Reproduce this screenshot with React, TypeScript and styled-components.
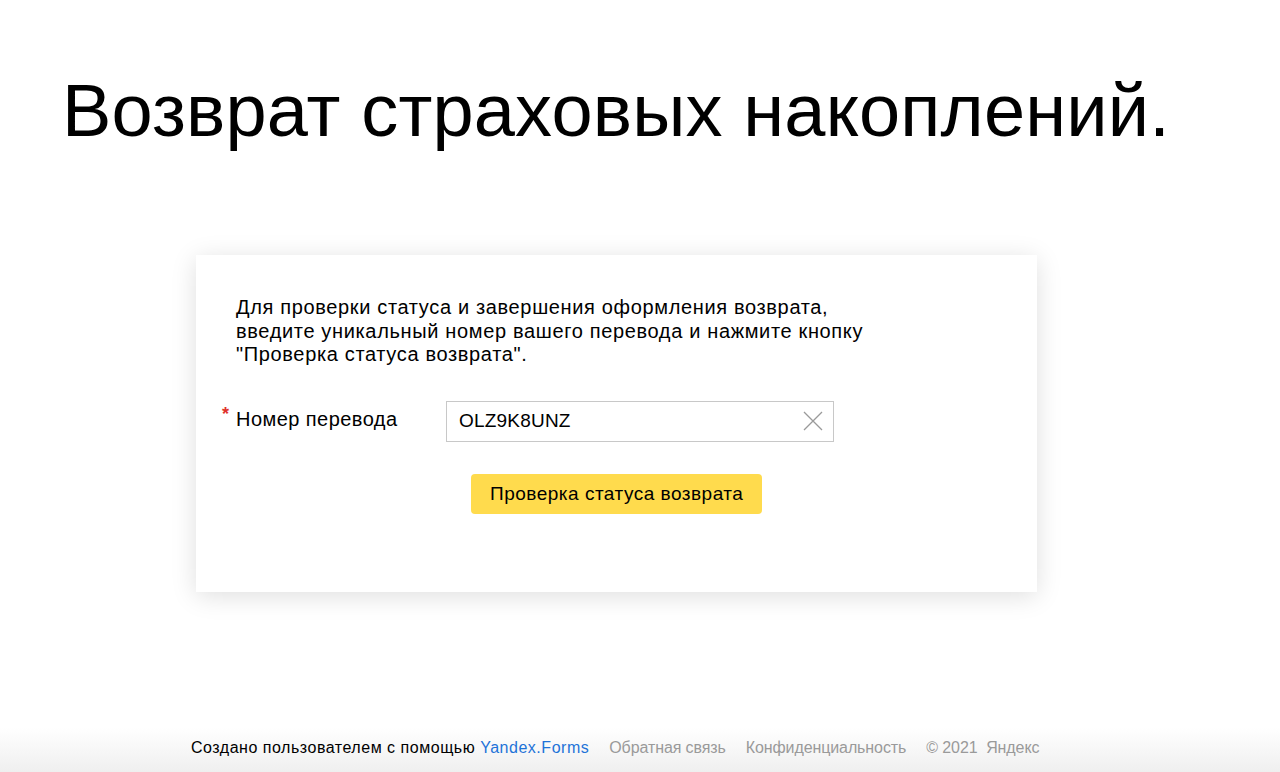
import React from "react";
import styled, { createGlobalStyle } from "styled-components";

const Global = createGlobalStyle`
  html, body { margin: 0; padding: 0; background: #fff; }
  body { font-family: "Liberation Sans", Arial, sans-serif; color: #000; }
`;

const Page = styled.div`
  min-height: 772px;
  display: flex;
  flex-direction: column;
`;

const Title = styled.h1`
  margin: 0;
  padding: 69px 0 0 62px;
  font-weight: 400;
  font-size: 74px;
  line-height: 84px;
  letter-spacing: 0.15px;
`;

const Main = styled.main`
  flex: 1;
  display: flex;
  justify-content: flex-start;
  padding: 102px 0 0 196px;
`;

const Card = styled.section`
  width: 841px;
  height: 337px;
  box-sizing: border-box;
  background: #fff;
  box-shadow: 0 4px 24px rgba(0, 0, 0, 0.13);
  padding: 41px 40px 0 40px;
`;

const Intro = styled.p`
  margin: 0;
  font-size: 20px;
  line-height: 23.5px;
  letter-spacing: 0.65px;
`;

const FieldRow = styled.div`
  display: flex;
  align-items: flex-start;
  margin-top: 34px;
`;

const Label = styled.label`
  position: relative;
  width: 210px;
  font-size: 20px;
  line-height: 24px;
  letter-spacing: 0.45px;
  padding-top: 6px;
`;

const Required = styled.span`
  position: absolute;
  left: -14px;
  top: 1px;
  color: #e0312b;
  font-size: 18px;
  font-weight: 700;
`;

const InputBox = styled.div`
  width: 388px;
  height: 41px;
  box-sizing: border-box;
  border: 1px solid #c8c8c8;
  display: flex;
  align-items: center;
  padding: 0 8px 0 12px;
`;

const Input = styled.input`
  flex: 1;
  border: none;
  outline: none;
  font-family: "Liberation Sans", Arial, sans-serif;
  font-size: 19px;
  letter-spacing: 0.2px;
  color: #000;
  padding: 0;
  background: transparent;
`;

const Clear = styled.button`
  border: none;
  background: none;
  padding: 0;
  width: 24px;
  height: 24px;
  display: flex;
  align-items: center;
  justify-content: center;
`;

const ButtonRow = styled.div`
  margin-top: 32px;
  padding-left: 235px;
`;

const Submit = styled.button`
  height: 40px;
  padding: 0 19px;
  border: none;
  border-radius: 4px;
  background: #ffdb4d;
  font-family: "Liberation Sans", Arial, sans-serif;
  font-size: 19px;
  letter-spacing: 0.5px;
  color: #000;
`;

const Footer = styled.footer`
  height: 52px;
  box-sizing: border-box;
  background: linear-gradient(to bottom, #ffffff 0%, #ffffff 15%, #efefef 100%);
  display: flex;
  align-items: flex-start;
  padding: 18px 0 0 191px;
  font-size: 16px;
  line-height: 20px;
  gap: 20px;
`;

const FooterText = styled.span<{ $muted?: boolean }>`
  color: ${(p) => (p.$muted ? "#9a9a9a" : "#000")};
  letter-spacing: ${(p) => (p.$muted ? "-0.1px" : "0.52px")};
  white-space: pre;
`;

const FooterLink = styled.a`
  color: #1e73d8;
  text-decoration: none;
`;

export default function App() {
  return (
    <Page>
      <Global />
      <Title>Возврат страховых накоплений.</Title>
      <Main>
        <Card>
          <Intro>
            Для проверки статуса и завершения оформления возврата,
            <br />
            введите уникальный номер вашего перевода и нажмите кнопку
            <br />
            "Проверка статуса возврата".
          </Intro>
          <FieldRow>
            <Label>
              <Required>*</Required>
              Номер перевода
            </Label>
            <InputBox>
              <Input defaultValue="OLZ9K8UNZ" />
              <Clear aria-label="clear">
                <svg width="20" height="20" viewBox="0 0 20 20">
                  <path d="M1 1L19 19M19 1L1 19" stroke="#9a9a9a" strokeWidth="1.3" fill="none" />
                </svg>
              </Clear>
            </InputBox>
          </FieldRow>
          <ButtonRow>
            <Submit>Проверка статуса возврата</Submit>
          </ButtonRow>
        </Card>
      </Main>
      <Footer>
        <FooterText>
          Создано пользователем с помощью <FooterLink href="#">Yandex.Forms</FooterLink>
        </FooterText>
        <FooterText $muted>Обратная связь</FooterText>
        <FooterText $muted>Конфиденциальность</FooterText>
        <FooterText $muted>© 2021  Яндекс</FooterText>
      </Footer>
    </Page>
  );
}
